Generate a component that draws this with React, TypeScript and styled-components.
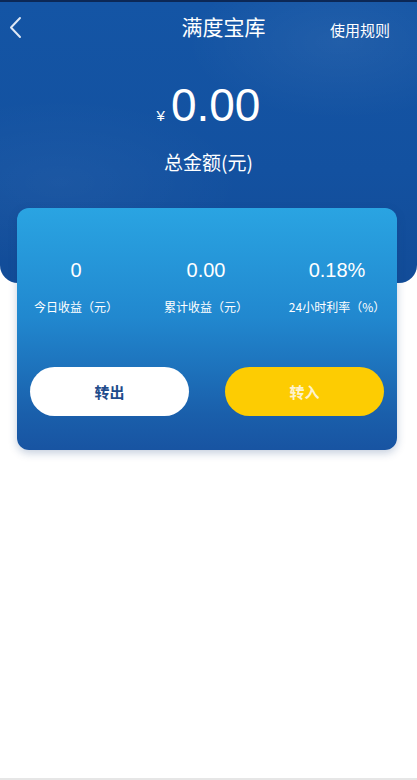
import React from "react";
import styled, { createGlobalStyle } from "styled-components";

const Global = createGlobalStyle`
  html, body { margin: 0; padding: 0; background: #fff; }
  body { font-family: "Noto Sans CJK SC", "Liberation Sans", sans-serif; }
  * { box-sizing: border-box; }
`;

const Page = styled.div`
  width: 417px;
  height: 780px;
  position: relative;
  overflow: hidden;
  background: #fff;
  border-bottom: 2px solid #e6e6e6;
`;

const Header = styled.div`
  height: 283px;
  border-top: 2px solid #0c2856;
  border-radius: 0 0 18px 18px;
  background:
    radial-gradient(ellipse 220px 110px at 340px 40px, rgba(255,255,255,0.06), transparent 70%),
    radial-gradient(ellipse 260px 120px at 60px 180px, rgba(255,255,255,0.04), transparent 70%),
    linear-gradient(180deg, #1455a5 0%, #1351a0 60%, #124c98 100%);
  display: flex;
  flex-direction: column;
  align-items: center;
  color: #fff;
`;

const NavBar = styled.div`
  width: 100%;
  height: 50px;
  display: grid;
  grid-template-columns: 80px 1fr 100px;
  align-items: center;
`;

const Back = styled.div`
  padding-left: 6px;
  padding-top: 2px;
  display: flex;
`;

const Title = styled.div`
  text-align: center;
  font-size: 21px;
  line-height: 1;
  margin-top: -2px;
  padding-left: 50px;
`;

const Rules = styled.div`
  font-size: 15px;
  text-align: right;
  padding-right: 27px;
  padding-top: 4px;
  white-space: nowrap;
`;

const Amount = styled.div`
  margin-top: 30px;
  display: flex;
  align-items: baseline;
`;

const Yen = styled.span`
  font-size: 15px;
  margin-right: 6px;
  font-family: "Liberation Sans", sans-serif;
`;

const Big = styled.span`
  font-family: "Liberation Sans", sans-serif;
  font-size: 46px;
  line-height: 46px;
`;

const Caption = styled.div`
  margin-top: 24px;
  font-size: 19px;
  line-height: 1;
`;

const Card = styled.div`
  position: relative;
  margin: -75px 20px 0 17px;
  height: 242px;
  border-radius: 12px;
  background: linear-gradient(180deg, #2aa4e2 0%, #2188cf 45%, #1a5fab 85%, #1854a2 100%);
  box-shadow: 0 3px 8px rgba(20, 60, 120, 0.25);
  padding-top: 52px;
  display: flex;
  flex-direction: column;
  color: #fff;
`;

const Stats = styled.div`
  display: grid;
  grid-template-columns: 118px 1fr 120px;
  text-align: center;
`;

const Stat = styled.div`
  display: flex;
  flex-direction: column;
  align-items: center;
`;

const Value = styled.div`
  font-family: "Liberation Sans", sans-serif;
  font-size: 20px;
  line-height: 20px;
`;

const Label = styled.div`
  margin-top: 21px;
  font-size: 12px;
  line-height: 1;
  white-space: nowrap;
`;

const Buttons = styled.div`
  margin-top: 54px;
  display: flex;
  justify-content: space-between;
  padding: 0 13px 0 13px;
`;

const Btn = styled.div<{ $primary?: boolean }>`
  width: 159px;
  height: 49px;
  border-radius: 25px;
  display: flex;
  align-items: center;
  justify-content: center;
  font-size: 15px;
  font-weight: bold;
  background: ${(p) => (p.$primary ? "#fdcc02" : "#ffffff")};
  color: ${(p) => (p.$primary ? "#fdf3d0" : "#1f4c8c")};
`;

export default function App() {
  return (
    <Page>
      <Global />
      <Header>
        <NavBar>
          <Back>
            <svg width="20" height="28" viewBox="0 0 20 28">
              <path d="M14 4 L5 13.5 L14 23" fill="none" stroke="#dfe8f5" strokeWidth="2" strokeLinecap="round" strokeLinejoin="round" />
            </svg>
          </Back>
          <Title>满度宝库</Title>
          <Rules>使用规则</Rules>
        </NavBar>
        <Amount>
          <Yen>¥</Yen>
          <Big>0.00</Big>
        </Amount>
        <Caption>总金额(元)</Caption>
      </Header>
      <Card>
        <Stats>
          <Stat>
            <Value>0</Value>
            <Label>今日收益（元）</Label>
          </Stat>
          <Stat>
            <Value>0.00</Value>
            <Label>累计收益（元）</Label>
          </Stat>
          <Stat>
            <Value>0.18%</Value>
            <Label>24小时利率（%）</Label>
          </Stat>
        </Stats>
        <Buttons>
          <Btn>转出</Btn>
          <Btn $primary>转入</Btn>
        </Buttons>
      </Card>
    </Page>
  );
}
